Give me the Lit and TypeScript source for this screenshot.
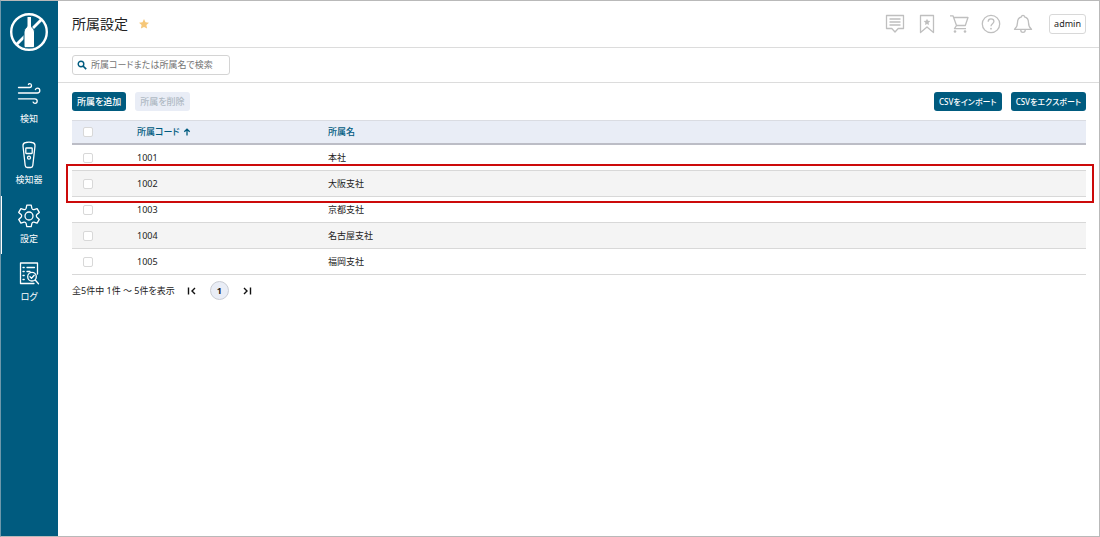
import { LitElement, html, css, svg } from "lit";
import { customElement, property, state } from "lit/decorators.js";
import { classMap } from "lit/directives/class-map.js";

const stroke = {
  wind: svg`<path d="M3.500 7.500h11c1.300 0 2-.9 2-2s-.7-1.900-1.700-1.900c-.7 0-1.200.3-1.400.9M3.500 13h18.700c1.600 0 2.600-1.100 2.600-2.500s-1-2.400-2.300-2.400c-1 0-1.800.6-2.100 1.500M3.500 18.800h16.300c1.400 0 2.400 1 2.400 2.300s-.9 2.300-2.200 2.300c-1 0-1.600-.5-1.900-1.300"/>`,
  device: svg`<path d="M11 1.500Q14 .8 17 1.500 20.200 2 20 5L17.800 24.500Q17.600 26.500 15.700 26.500H12.300Q10.400 26.500 10.200 24.500L8 5Q7.800 2 11 1.500Z"/><rect x="10.800" y="7" width="6.400" height="5.500" rx=".5"/><circle cx="14" cy="16.700" r="1.500"/>`,
  gear: svg`<circle cx="14" cy="14" r="4"/><path d="M11.800 3.200h4.400l.7 3.200c.3.900 1.200 1.400 2.100 1.200l3.100-1 2.200 3.800-2.400 2.200c-.7.600-.7 1.900 0 2.600l2.400 2.200-2.200 3.800-3.100-1c-.9-.2-1.800.300-2.100 1.200l-.7 3.200h-4.400l-.7-3.200c-.3-.9-1.200-1.400-2.100-1.200l-3.100 1-2.200-3.800 2.400-2.200c.7-.7.7-2 0-2.600l-2.400-2.200 2.200-3.800 3.100 1c.9.200 1.800-.3 2.100-1.200z"/>`,
  log: svg`<path d="M22.500 14V3h-17v20.500H19M12 7.500h7.500M12 11.500h3M8 7.500h1.200M8 11.500h1.200M8 15.500h1.200M8 19.500h1.200"/><circle cx="17" cy="16.700" r="4.300"/><path d="m20.200 20 3.300 3.800M15 16.700l1.500 1.500 2.700-3"/>`,
};

const tools = [
  { label: "メッセージ", art: svg`<path d="M1.500 1.500h17v13h-5.300L10 18l-3.200-3.500H1.500zM4.500 5h11M4.500 8h11M4.500 11h11"/>` },
  { label: "ブックマーク", art: svg`<path d="M3.500 1.500h13v17L10 13l-6.500 5.500z"/><path class="solid" d="m10 4.700 1 2.100 2.300.3-1.700 1.600.4 2.300-2-1.100L8 11l.4-2.300-1.700-1.600L9 6.800z"/>` },
  { label: "カート", art: svg`<path d="M1 1.800h3l3.500 9.700h8.800l2.700-8H4.800M7.500 11.500l-2 3.200H17"/><circle class="solid" cx="6" cy="17.500" r="1.300"/><circle class="solid" cx="16" cy="17.500" r="1.300"/>` },
  { label: "ヘルプ", art: svg`<circle cx="10" cy="10" r="8.700"/><path d="M7.200 7.700c0-1.700 1.200-2.800 2.800-2.800s2.900 1 2.900 2.600c0 2.200-2.900 2.300-2.900 4.700"/><circle class="solid" cx="10" cy="14.700" r=".9"/>` },
  { label: "通知", art: svg`<path d="M8.500 2.800a1.500 1.500 0 0 1 3 0c2.900.7 4 3 4 5.700 0 4.500 1.200 5.300 3 6.800h-17c1.800-1.500 3-2.300 3-6.800 0-2.700 1.100-5 4-5.700zM7.700 15.500c0 3.800 4.600 3.800 4.600 0"/>` },
];

interface Department {
  code: string;
  name: string;
  marked?: boolean;
}

const departments: Department[] = [
  { code: "1001", name: "本社" },
  { code: "1002", name: "大阪支社", marked: true },
  { code: "1003", name: "京都支社" },
  { code: "1004", name: "名古屋支社" },
  { code: "1005", name: "福岡支社" },
];

@customElement("side-nav")
class SideNav extends LitElement {
  @property() current = "";

  static styles = css`
    :host {
      display: block;
      padding-right: 1px;
      background: #005b7f;
      color: #fff;
    }
    .brand {
      display: block;
      width: 40px;
      height: 40px;
      margin: 11px auto 22px;
    }
    .brand svg {
      display: block;
    }
    .links {
      display: flex;
      flex-direction: column;
    }
    .item {
      display: flex;
      flex-direction: column;
      align-items: center;
      gap: 2px;
      height: 58px;
      box-sizing: border-box;
      border-left: 1px solid transparent;
      padding: 6px 1px 0 0;
      color: inherit;
      text-decoration: none;
      font-size: 9px;
      line-height: 14px;
    }
    .item svg {
      fill: none;
      stroke: #fff;
      stroke-width: 1.3;
      stroke-linecap: round;
      stroke-linejoin: round;
    }
    .tall {
      height: 61px;
      gap: 4px;
    }
    .current {
      border-left-color: #fff;
    }
  `;

  render() {
    const items = [
      { label: "検知", art: stroke.wind, tall: true },
      { label: "検知器", art: stroke.device, tall: true },
      { label: "設定", art: stroke.gear },
      { label: "ログ", art: stroke.log },
    ];
    return html`
      <a class="brand" href="#" aria-label="ホーム">
        <svg width="40" height="40" viewBox="0 0 40 40">
          <circle cx="20" cy="20" r="17.800" fill="none" stroke="#fff" stroke-width="2.400" />
          <path d="M7.500 32.500 32.500 7.500" stroke="#fff" stroke-width="2.800" />
          <path
            d="M18 4.500h4.500v9.500c0 2 3 2.500 3 6V34q0 1.700-1.200 1.700h-8.100Q15 35.700 15 34V20c0-3.500 3-4 3-6z"
            fill="#fff" stroke="#005b7f" stroke-width="1" />
        </svg>
      </a>
      <nav class="links">
        ${items.map(
          (item) => html`
            <a href="#" class=${classMap({ item: true, tall: !!item.tall, current: item.label === this.current })}>
              <svg width="28" height="28" viewBox="0 0 28 28">${item.art}</svg>
              <span>${item.label}</span>
            </a>
          `
        )}
      </nav>
    `;
  }
}

@customElement("app-root")
class AppRoot extends LitElement {
  @state() private query = "";

  static styles = css`
    :host {
      display: grid;
      grid-template-columns: 57px minmax(0, 1fr);
      min-height: 100vh;
      box-sizing: border-box;
      border: 1px solid #b9b9b9;
      border-left-color: #6d98ab;
      background: #fff;
      color: #222;
      font-family: "Noto Sans", "Noto Sans CJK JP", sans-serif;
      font-feature-settings: "palt";
      font-size: 9px;
      line-height: 14px;
    }
    button,
    input {
      font: inherit;
      font-feature-settings: inherit;
      color: inherit;
      box-sizing: border-box;
      margin: 0;
    }
    header {
      display: flex;
      align-items: center;
      height: 47px;
      box-sizing: border-box;
      padding: 0 13px 0 14px;
      border-bottom: 1px solid #dcdcdc;
    }
    h1 {
      margin: 0;
      font-size: 14px;
      line-height: 20px;
      font-weight: 400;
    }
    .plain {
      display: block;
      padding: 0;
      border: 0;
      background: none;
    }
    .plain svg {
      display: block;
    }
    .favorite {
      margin-left: 10px;
    }
    .tools {
      display: flex;
      align-items: center;
      gap: 12px;
      margin-left: auto;
    }
    .tools svg {
      fill: none;
      stroke: #bfbfbf;
      stroke-width: 1.3;
      stroke-linejoin: round;
    }
    .solid {
      fill: #bfbfbf;
      stroke: none;
    }
    .user {
      height: 20px;
      margin-left: 4px;
      padding: 0 4px;
      border: 1px solid #d8d8d8;
      border-radius: 3px;
      background: #fff;
    }
    .search {
      padding: 7px 14px;
      border-bottom: 1px solid #dcdcdc;
    }
    .field {
      display: flex;
      align-items: center;
      gap: 4px;
      width: 158px;
      height: 20px;
      box-sizing: border-box;
      padding: 0 4px;
      border: 1px solid #d4d4d4;
      border-radius: 3px;
    }
    .field svg {
      flex: none;
    }
    .field input {
      flex: 1;
      min-width: 0;
      padding: 0;
      border: 0;
      outline: 0;
      background: none;
    }
    .field input::placeholder {
      color: #757575;
      opacity: 1;
    }
    .content {
      padding: 9px 13px 0 14px;
    }
    .actions {
      display: flex;
      gap: 9px;
      margin-bottom: 9px;
    }
    .action {
      height: 19px;
      padding: 0 5px;
      border: 0;
      border-radius: 3px;
      background: #005b7f;
      color: #fff;
      font-weight: 500;
      white-space: nowrap;
    }
    .action:disabled {
      background: #e9edf6;
      color: #b0bac4;
    }
    .export {
      display: flex;
      gap: 9px;
      margin-left: auto;
      font-size: 8px;
    }
    table {
      width: 100%;
      border-collapse: separate;
      border-spacing: 0;
      table-layout: fixed;
    }
    th,
    td {
      height: 26px;
      box-sizing: border-box;
      padding: 0 8px;
      border-bottom: 1px solid #d8d8d8;
      text-align: left;
    }
    th {
      height: 25px;
      border-top: 1px solid #dadce2;
      border-bottom: 2px solid #bcbdc6;
      background: #e9edf6;
      color: #005b7f;
      font-weight: 500;
    }
    .pick {
      width: 57px;
      padding: 0 0 0 11px;
    }
    .code {
      width: 191px;
    }
    .sort {
      display: flex;
      align-items: center;
      gap: 3px;
    }
    tbody tr:nth-child(even) td {
      background: #f4f4f4;
    }
    .marked {
      position: relative;
    }
    .marked .pick::after {
      content: "";
      position: absolute;
      inset: -7px -8px -6px -6px;
      border: 2px solid #cc0a0a;
      pointer-events: none;
    }
    .check {
      appearance: none;
      display: block;
      width: 10px;
      height: 10px;
      border: 1px solid #d8d8d8;
      border-radius: 2px;
      background: #fff;
    }
    .check:checked {
      background: #005b7f;
    }
    .pager {
      display: flex;
      align-items: center;
      margin-top: 6px;
    }
    .first {
      margin-left: 12px;
    }
    .page {
      width: 19px;
      height: 19px;
      margin: 0 13px;
      padding: 0;
      border: 1px solid #c9ccd3;
      border-radius: 50%;
      background: #e9edf6;
      font-weight: 700;
      line-height: 16px;
    }
  `;

  render() {
    return html`
      <side-nav current="設定"></side-nav>
      <main>
        <header>
          <h1>所属設定</h1>
          <button class="plain favorite" aria-label="お気に入り">
            <svg width="12" height="12" viewBox="0 0 12 12">
              <path fill="#f6c778" d="m6 1 1.500 3.300 3.500.4-2.600 2.400.7 3.500L6 8.900l-3.100 1.700.7-3.500L1 4.700l3.500-.4z" />
            </svg>
          </button>
          <div class="tools">
            ${tools.map(
              (tool) => html`
                <button class="plain" aria-label=${tool.label}>
                  <svg width="20" height="20" viewBox="0 0 20 20">${tool.art}</svg>
                </button>
              `
            )}
            <button class="user">admin</button>
          </div>
        </header>
        <div class="search">
          <label class="field">
            <svg width="10" height="10" viewBox="0 0 10 10" fill="none" stroke="#005b7f">
              <circle cx="4" cy="4" r="2.800" stroke-width="1.400" />
              <path d="m6 6 3.200 3.200" stroke-width="1.700" />
            </svg>
            <input
              type="text"
              aria-label="所属を検索"
              placeholder="所属コードまたは所属名で検索"
              .value=${this.query}
              @input=${(e: Event) => (this.query = (e.target as HTMLInputElement).value)}
            />
          </label>
        </div>
        <div class="content">
          <div class="actions">
            <button class="action">所属を追加</button>
            <button class="action" disabled>所属を削除</button>
            <div class="export">
              <button class="action">CSVをインポート</button>
              <button class="action">CSVをエクスポート</button>
            </div>
          </div>
          <table>
            <thead>
              <tr>
                <th class="pick"><input class="check" type="checkbox" aria-label="すべて選択" /></th>
                <th class="code">
                  <span class="sort">
                    所属コード
                    <svg width="8" height="8" viewBox="0 0 8 8" fill="none" stroke="#005b7f" stroke-width="1.300">
                      <path d="M4 7.500V1.200M1.300 3.800 4 1.200l2.700 2.600" />
                    </svg>
                  </span>
                </th>
                <th>所属名</th>
              </tr>
            </thead>
            <tbody>
              ${departments.map(
                (row) => html`
                  <tr class=${classMap({ marked: !!row.marked })}>
                    <td class="pick"><input class="check" type="checkbox" aria-label=${row.name} /></td>
                    <td>${row.code}</td>
                    <td>${row.name}</td>
                  </tr>
                `
              )}
            </tbody>
          </table>
          <div class="pager">
            <span>全5件中 1件 ～ 5件を表示</span>
            <button class="plain first" aria-label="最初のページ">
              <svg width="10" height="10" viewBox="0 0 10 10" fill="none" stroke="#111" stroke-width="1.400">
                <path d="M1.500 1.500v7M8 2 5 5l3 3" />
              </svg>
            </button>
            <button class="page">1</button>
            <button class="plain" aria-label="最後のページ">
              <svg width="10" height="10" viewBox="0 0 10 10" fill="none" stroke="#111" stroke-width="1.400">
                <path d="M8.500 1.500v7M2 2l3 3-3 3" />
              </svg>
            </button>
          </div>
        </div>
      </main>
    `;
  }
}
